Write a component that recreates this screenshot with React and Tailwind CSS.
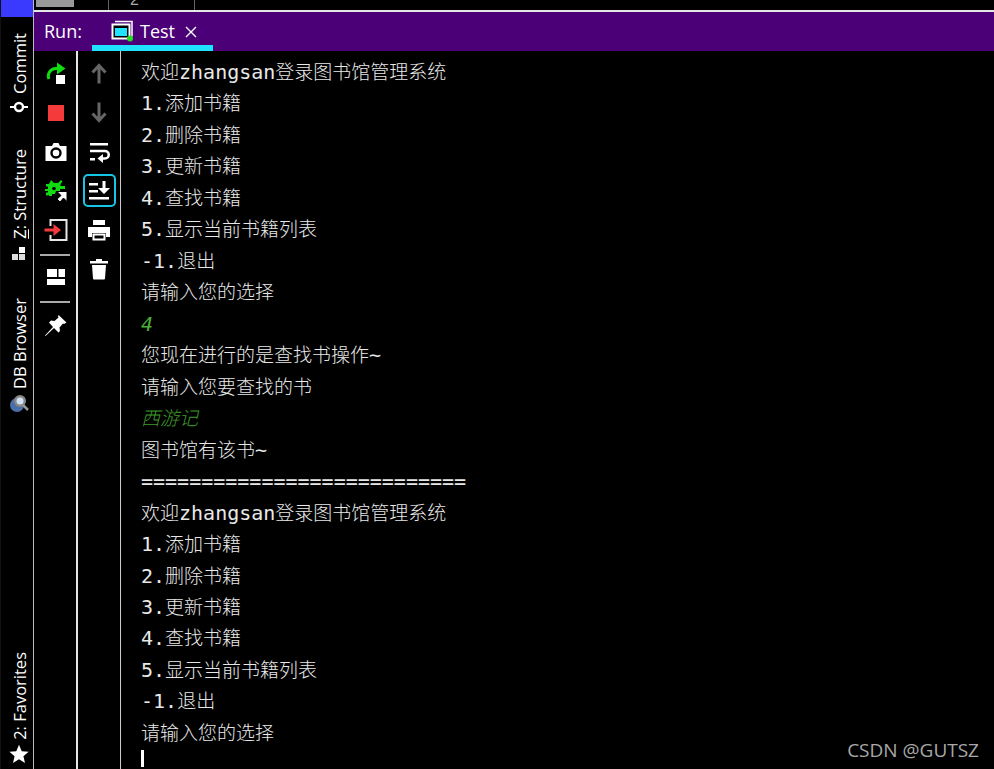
import React from "react";

const mono = "font-['DejaVu_Sans_Mono','Noto_Sans_CJK_SC',monospace]";
const lines = [
  ["欢迎zhangsan登录图书馆管理系统"], ["1.添加书籍"], ["2.删除书籍"], ["3.更新书籍"], ["4.查找书籍"], ["5.显示当前书籍列表"], ["-1.退出"], ["请输入您的选择"],
  ["4", "in"], ["您现在进行的是查找书操作~"], ["请输入您要查找的书"], ["西游记", "inb"], ["图书馆有该书~"], ["==========================="],
  ["欢迎zhangsan登录图书馆管理系统"], ["1.添加书籍"], ["2.删除书籍"], ["3.更新书籍"], ["4.查找书籍"], ["5.显示当前书籍列表"], ["-1.退出"], ["请输入您的选择"],
];

function Line({ text }) {
  return text.split(/([\x00-\x7f]+)/).filter(Boolean).map((s, i) =>
    /^[\x00-\x7f]/.test(s)
      ? <span key={i} className="text-[20px]">{s}</span>
      : <span key={i} className="text-[19px] font-light">{s}</span>
  );
}

function Vert({ children, className = "" }) {
  return <div className={"[writing-mode:vertical-rl] rotate-180 text-white text-[16.500px] leading-[20px] ml-[2px] font-['Open_Sans','Noto_Sans',sans-serif] whitespace-nowrap " + className}>{children}</div>;
}

function Ico({ children, w = 24, h = 24, className = "" }) {
  return <svg width={w} height={h} viewBox="0 0 24 24" className={className}>{children}</svg>;
}

export default function App() {
  return (
    <div className="w-[994px] h-[769px] bg-black overflow-hidden flex relative">
      {/* left stripe */}
      <div className="w-[34px] h-full border-l border-l-[#111] border-r border-r-[#bbbbbb] flex flex-col items-center shrink-0 relative pl-[3px]">
        <div className="absolute left-0 top-0 w-full h-[17px] bg-[#3a3aff]" />
        <Vert className="mt-[33px]">Commit</Vert>
        <svg width="20" height="12" viewBox="0 0 20 12" className="mt-[7px]">
          <path d="M1 6h18" stroke="#fff" strokeWidth="2" />
          <circle cx="10" cy="6" r="4" fill="#000" stroke="#fff" strokeWidth="2.4" />
        </svg>
        <Vert className="mt-[36px]"><span className="underline">Z</span>: Structure</Vert>
        <svg width="16" height="16" viewBox="0 0 16 16" className="mt-[7px]">
          <rect x="8" y="1" width="6" height="6" fill="#fff" />
          <rect x="1" y="8" width="6" height="6" fill="#ddd" />
          <rect x="8" y="8" width="6" height="6" fill="#ddd" />
        </svg>
        <Vert className="mt-[36px]">DB Browser</Vert>
        <svg width="22" height="22" viewBox="0 0 22 22" className="mt-[3px]">
          <circle cx="9" cy="13" r="7" fill="#4a6ea8" />
          <circle cx="12" cy="9" r="6" fill="#888" />
          <circle cx="12" cy="9" r="3.5" fill="#cfe2f5" />
          <path d="M15 13l5 5" stroke="#999" strokeWidth="2.5" />
        </svg>
        <Vert className="mt-auto">2: Favorites</Vert>
        <svg width="20" height="20" viewBox="0 0 24 24" className="mt-[4px] mb-[5px]">
          <path d="M12 1l3.3 7.6 8.2.7-6.2 5.4 1.9 8-7.2-4.3-7.2 4.3 1.9-8L.5 9.3l8.2-.7z" fill="#fff" />
        </svg>
      </div>

      <div className="flex-1 flex flex-col min-w-0">
        {/* top tab strip */}
        <div className="h-[10px] shrink-0 flex overflow-hidden relative">
          <div className="w-[38px] h-[7px] bg-[#999] ml-[2px]" />
          <div className="w-[34px]" />
          <div className="w-[87px] border-l border-r border-[#666] text-[#aaa] text-[16px] leading-[10px] pl-[21px] font-['Liberation_Sans',sans-serif]">
            <span className="relative -top-[5px]">2</span>
          </div>
          <div className="flex-1" />
        </div>
        <div className="h-[2px] bg-[#e6e6e6] shrink-0" />
        {/* run header */}
        <div className="h-[39px] bg-[#4b0078] flex shrink-0 items-stretch">
          <div className="w-[58px] pl-[10px] pt-[7px] text-white text-[18px] leading-[24px] font-['Open_Sans','Noto_Sans',sans-serif]">Run:</div>
          <div className="w-[121px] relative flex pl-[19px] pt-[7px]">
            <svg width="24" height="24" viewBox="0 0 24 24">
              <path d="M4 2.500h17v15" fill="none" stroke="#fff" strokeWidth="1.500" />
              <rect x="1.500" y="5.500" width="17" height="14" fill="#000" stroke="#fff" strokeWidth="2" />
              <rect x="4" y="9" width="12" height="8" fill="#1fe3ff" />
              <circle cx="19" cy="19.500" r="3" fill="#22dd22" />
            </svg>
            <span className="ml-[5px] text-white text-[18px] leading-[24px] font-['Open_Sans','Noto_Sans',sans-serif]">Test</span>
            <svg width="14" height="14" viewBox="0 0 14 14" className="ml-[9px] mt-[6px]">
              <path d="M2 2l10 10M12 2L2 12" stroke="#fff" strokeWidth="1.400" />
            </svg>
            <div className="absolute left-0 right-0 bottom-0 h-[6px] bg-[#1fe3ff]" />
          </div>
        </div>
        {/* body */}
        <div className="flex-1 flex min-h-0">
          {/* actions column */}
          <div className="w-[44px] border-r-2 border-r-[#e6e6e6] flex flex-col items-center shrink-0 pt-[10px] pl-[2px]">
            <Ico>
              <path d="M5 18 A7.500 7.500 0 0 1 11 7.500 h5" fill="none" stroke="#10dd10" strokeWidth="3" />
              <path d="M13 1.500l8.500 6-8.500 6z" fill="#10dd10" />
              <rect x="12" y="14" width="9" height="9" fill="#fff" />
            </Ico>
            <div className="h-[39px] w-full flex items-center justify-center mt-[8px]"><div className="w-[16px] h-[16px] bg-[#f43a3a]" /></div>
            <div className="h-[39px] w-full flex items-center justify-center">
              <Ico>
                <path d="M1.500 6h6.500l1.500-3h5l1.500 3h6.500v15h-21z" fill="#fff" />
                <circle cx="12" cy="13" r="4.500" fill="none" stroke="#000" strokeWidth="2.400" />
              </Ico>
            </div>
            <div className="h-[39px] w-full flex items-center justify-center">
              <Ico>
                <path d="M7 1l3 3h4l3-3 1.500 1.500-2 2.500v2H21v3h-5v2h-4l-1 3H8v2H5v-1l-3 .500v-3h2v-1.500H1V10h3V7.500H2V5h3z" fill="#10dd10" />
                <circle cx="10" cy="9.500" r="1.800" fill="#000" />
                <path d="M13 12.500h10v10l-3.500-3.500-3.500 4-3-3 4-3.500z" fill="#fff" stroke="#000" strokeWidth="1" />
              </Ico>
            </div>
            <div className="h-[39px] w-full flex items-center justify-center">
              <Ico>
                <path d="M6.500 8V2h16v20h-16v-5" fill="none" stroke="#e8e8e8" strokeWidth="2" />
                <path d="M0.500 10.500h9V6l7.500 6-7.500 6v-4.500h-9z" fill="#f43a3a" />
              </Ico>
            </div>
            <div className="w-[30px] h-[2px] bg-[#aaa] mt-[5px] -ml-[2px]" />
            <div className="h-[42px] w-full flex items-center justify-center">
              <svg width="20" height="18" viewBox="0 0 20 18">
                <rect x="1" y="1" width="10" height="8" fill="#fff" />
                <rect x="12.500" y="1" width="6.500" height="8" fill="#fff" />
                <rect x="1" y="11" width="18" height="6" fill="#fff" />
              </svg>
            </div>
            <div className="w-[30px] h-[2px] bg-[#aaa] mt-[3px] -ml-[2px]" />
            <div className="h-[46px] w-full flex items-center justify-center">
              <Ico>
                <path d="M14.500 1l8 7.500-2.500 1.500-1-.500-3.500 4 .5 3.500-1.500 1.500-4.500-4.500-8.500 8-.500-.500 8-8.500-4-4.500L7 6.500l3.500.5 4-3.500-.5-1z" fill="#fff" />
              </Ico>
            </div>
          </div>
          {/* console toolbar */}
          <div className="w-[43px] border-r border-r-[#cccccc] flex flex-col items-center shrink-0 pt-[4px] gap-[3.300px]">
            <div className="h-[36px] w-full flex items-center justify-center">
              <Ico><path d="M12 4.500v18M5.500 11.500L12 4.500l6.500 7" fill="none" stroke="#666" strokeWidth="3" /></Ico>
            </div>
            <div className="h-[36px] w-full flex items-center justify-center">
              <Ico><path d="M12 2.500v18M5.500 13.500l6.500 7 6.500-7" fill="none" stroke="#666" strokeWidth="3" /></Ico>
            </div>
            <div className="h-[36px] w-full flex items-center justify-center">
              <Ico>
                <path d="M3 3h18v2.500H3z M3 18h5v2.500H3z" fill="#fff" />
                <path d="M3 11h15a3.500 3.500 0 0 1 0 7.500h-4" fill="none" stroke="#fff" strokeWidth="2.500" />
                <path d="M16 14l-5.500 4.500 5.500 4.500z" fill="#fff" />
              </Ico>
            </div>
            <div className="h-[36px] w-full flex items-center justify-center">
              <div className="h-[33px] w-[33px] border-2 border-[#17c6e6] rounded-[5px] flex items-center justify-center shrink-0">
                <Ico>
                  <path d="M2 4h9v2.500H2zM2 11h9v2.500H2zM2 18h20v2.500H2z" fill="#fff" />
                  <path d="M15.500 2h3v7H23l-6 6-6-6h4.500z" fill="#fff" />
                </Ico>
              </div>
            </div>
            <div className="h-[36px] w-full flex items-center justify-center">
              <Ico>
                <path d="M6 2h12v5H6z" fill="#fff" />
                <path d="M1 9h22v10h-4v-4H5v4H1z" fill="#fff" />
                <path d="M6.500 16.500h11v5h-11z" fill="none" stroke="#fff" strokeWidth="2" />
              </Ico>
            </div>
            <div className="h-[36px] w-full flex items-center justify-center">
              <Ico>
                <path d="M9 2h6v2h6v2.500H3V4h6z" fill="#fff" />
                <path d="M5 8h14l-1 13.500q0 1-1 1H7q-1 0-1-1z" fill="#fff" />
              </Ico>
            </div>
          </div>
          {/* console */}
          <div className={"flex-1 pl-[20px] pt-[6px] leading-[31.480px] text-[#e8e8e8] relative " + mono}>
            {lines.map(([t, k], i) => (
              <div key={i} className={"whitespace-pre h-[31.480px] " + (k === "in" ? "text-[#4caf3a] italic" : k === "inb" ? "text-[#3f9b2a] italic" : "")}><Line text={t} /></div>
            ))}
            <div className="w-[3px] h-[17px] bg-white mt-[1px]" />
          </div>
        </div>
      </div>
      <div className="absolute right-[15px] bottom-[7px] text-[#a8a8a8] text-[19px] leading-[24px] font-['Open_Sans','Noto_Sans',sans-serif]">CSDN @GUTSZ</div>
    </div>
  );
}
